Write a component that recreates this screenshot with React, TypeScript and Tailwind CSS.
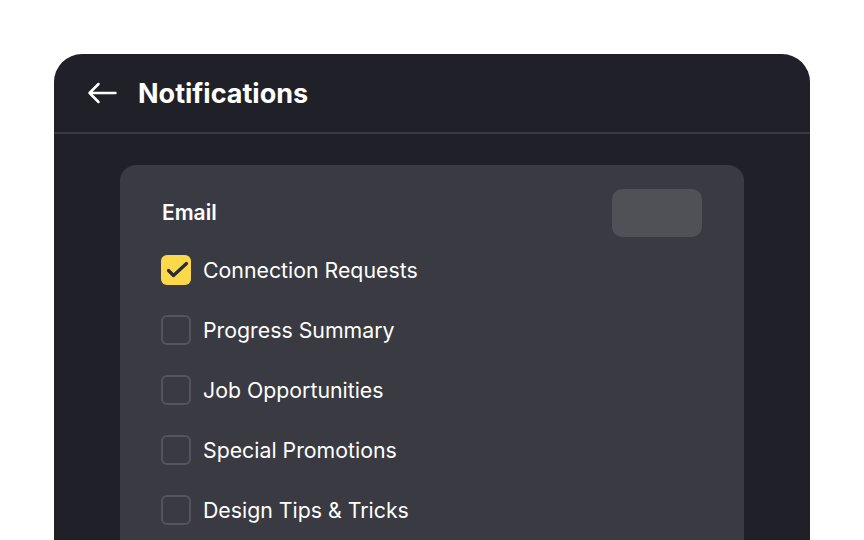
import React from "react";

const options = [
  { label: "Connection Requests", checked: true },
  { label: "Progress Summary", checked: false },
  { label: "Job Opportunities", checked: false },
  { label: "Special Promotions", checked: false },
  { label: "Design Tips & Tricks", checked: false },
];

const Checkbox: React.FC<{ checked: boolean }> = ({ checked }) =>
  checked ? (
    <div className="w-[30px] h-[30px] rounded-[6px] bg-[#fcd94a] shrink-0">
      <svg width="30" height="30" viewBox="0 0 30 30" fill="none">
        <path
          d="M7.5 15.5l5 5L25.5 8.5"
          stroke="#2a2a31"
          strokeWidth="3.2"
          strokeLinecap="round"
          strokeLinejoin="round"
        />
      </svg>
    </div>
  ) : (
    <div className="w-[30px] h-[30px] rounded-[6px] border-2 border-[#54555b] shrink-0" />
  );

export default function App() {
  return (
    <div
      className="h-[540px] overflow-hidden bg-white pt-[54px] px-[54px]"
      style={{ fontFamily: "Inter, 'Noto Sans', sans-serif" }}
    >
      <div className="h-[600px] bg-[#202028] rounded-t-[28px] flex flex-col">
        <div className="h-[80px] flex items-center pl-[33px] gap-[21px] border-b-2 border-[#3a3a43]">
          <svg width="30" height="22" viewBox="0 0 30 22" fill="none">
            <path
              d="M28.5 11H2.5M11.5 2L2.5 11l9 9"
              stroke="#ffffff"
              strokeWidth="2.5"
              strokeLinecap="round"
              strokeLinejoin="round"
            />
          </svg>
          <h1 className="text-white text-[27px] font-bold pt-[3px]">Notifications</h1>
        </div>
        <div className="px-[66px] pt-[31px]">
          <div className="bg-[#393a42] rounded-[16px] pt-[24px] px-[42px] pb-[40px]">
            <div className="flex items-center justify-between h-[48px]">
              <span className="text-white text-[21px] font-semibold">Email</span>
              <div className="w-[90px] h-[48px] rounded-[10px] bg-[#505157]" />
            </div>
            <div className="flex flex-col gap-[30px] mt-[18px] -ml-[1px]">
              {options.map((o) => (
                <div key={o.label} className="flex items-center gap-[12px] h-[30px]">
                  <Checkbox checked={o.checked} />
                  <span className="text-white text-[21.3px] pt-[1px]">{o.label}</span>
                </div>
              ))}
            </div>
          </div>
        </div>
      </div>
    </div>
  );
}
